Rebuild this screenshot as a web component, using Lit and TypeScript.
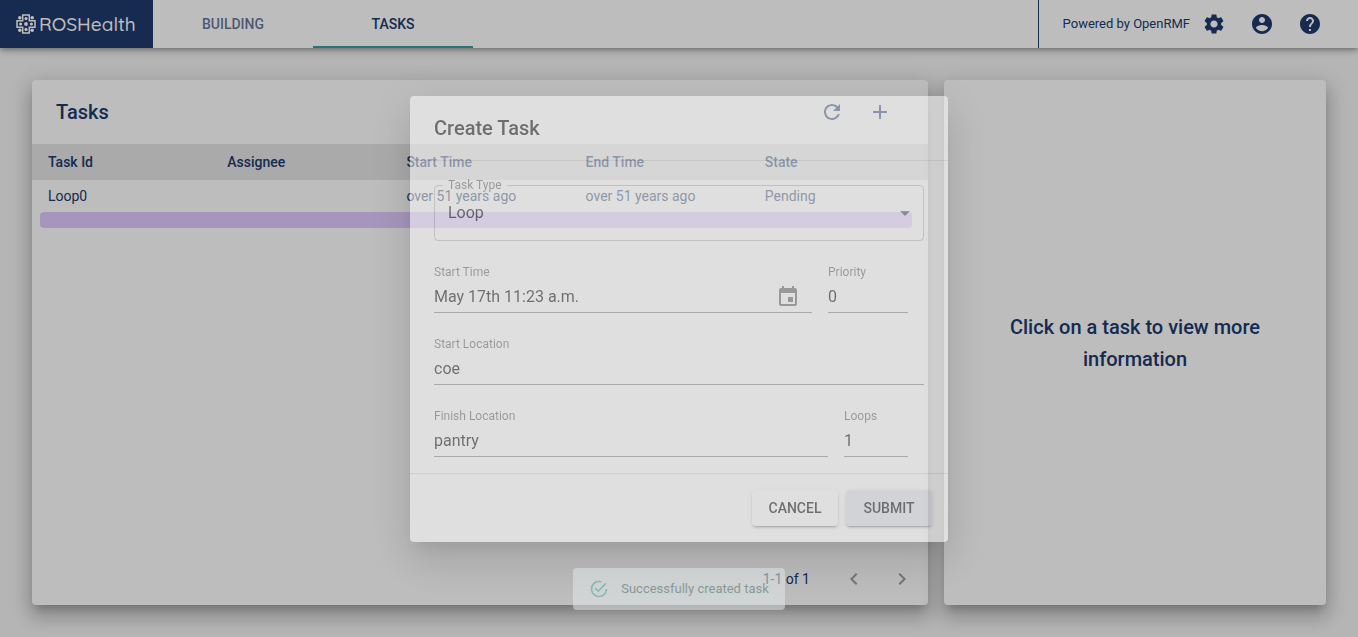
import { LitElement, html, css, svg } from "lit";
import { customElement, property, state } from "lit/decorators.js";

const ICONS: Record<string, string> = {
  settings:
    "M19.14 12.94c.04-.3.06-.61.06-.94 0-.32-.02-.64-.07-.94l2.03-1.58c.18-.14.23-.41.12-.61l-1.92-3.32c-.12-.22-.37-.29-.59-.22l-2.39.96c-.5-.38-1.03-.7-1.62-.94l-.36-2.54c-.04-.24-.24-.41-.48-.41h-3.84c-.24 0-.43.17-.47.41l-.36 2.54c-.59.24-1.13.57-1.62.94l-2.39-.96c-.22-.08-.47 0-.59.22L2.74 8.87c-.12.21-.08.47.12.61l2.03 1.58c-.05.3-.09.63-.09.94s.02.64.07.94l-2.03 1.58c-.18.14-.23.41-.12.61l1.92 3.32c.12.22.37.29.59.22l2.39-.96c.5.38 1.03.7 1.62.94l.36 2.54c.05.24.24.41.48.41h3.84c.24 0 .44-.17.47-.41l.36-2.54c.59-.24 1.13-.56 1.62-.94l2.39.96c.22.08.47 0 .59-.22l1.92-3.32c.12-.22.07-.47-.12-.61l-2.01-1.58zM12 15.6c-1.98 0-3.6-1.62-3.6-3.6s1.62-3.6 3.6-3.6 3.6 1.62 3.6 3.6-1.62 3.6-3.6 3.6z",
  account:
    "M12 2C6.48 2 2 6.48 2 12s4.48 10 10 10 10-4.48 10-10S17.52 2 12 2zm0 3c1.66 0 3 1.34 3 3s-1.34 3-3 3-3-1.34-3-3 1.34-3 3-3zm0 14.2c-2.5 0-4.71-1.28-6-3.22.03-1.99 4-3.08 6-3.08 1.99 0 5.97 1.09 6 3.08-1.29 1.94-3.5 3.22-6 3.22z",
  help: "M12 2C6.48 2 2 6.48 2 12s4.48 10 10 10 10-4.48 10-10S17.52 2 12 2zm1 17h-2v-2h2v2zm2.07-7.75l-.9.92C13.45 12.9 13 13.5 13 15h-2v-.5c0-1.1.45-2.1 1.17-2.83l1.24-1.26c.37-.36.59-.86.59-1.41 0-1.1-.9-2-2-2s-2 .9-2 2H8c0-2.21 1.79-4 4-4s4 1.79 4 4c0 .88-.36 1.68-.93 2.25z",
  refresh:
    "M17.65 6.35C16.2 4.9 14.21 4 12 4c-4.42 0-7.99 3.58-7.99 8s3.57 8 7.99 8c3.73 0 6.84-2.55 7.73-6h-2.08c-.82 2.33-3.04 4-5.65 4-3.31 0-6-2.69-6-6s2.69-6 6-6c1.66 0 3.14.69 4.22 1.78L13 11h7V4l-2.35 2.35z",
  add: "M19 13h-6v6h-2v-6H5v-2h6V5h2v6h6v2z",
  left: "M15.41 7.41L14 6l-6 6 6 6 1.41-1.41L10.83 12z",
  right: "M10 6L8.59 7.41 13.17 12l-4.58 4.59L10 18l6-6z",
  event:
    "M17 12h-5v5h5v-5zM16 1v2H8V1H6v2H5c-1.11 0-1.99.9-1.99 2L3 19c0 1.1.89 2 2 2h14c1.1 0 2-.9 2-2V5c0-1.1-.9-2-2-2h-1V1h-2zm3 18H5V8h14v11z",
  dropdown: "M7 10l5 5 5-5z",
  success:
    "M20 12A8 8 0 0 1 12 20A8 8 0 0 1 4 12A8 8 0 0 1 12 4C12.76 4 13.5 4.11 14.2 4.31L15.77 2.74C14.61 2.26 13.34 2 12 2A10 10 0 0 0 2 12A10 10 0 0 0 12 22A10 10 0 0 0 22 12M7.91 10.08L6.5 11.5L11 16L21 6L19.59 4.58L11 13.17L7.91 10.08Z",
};

@customElement("rmf-icon")
export class RmfIcon extends LitElement {
  @property() name = "add";

  static styles = css`
    :host {
      display: inline-flex;
      width: 24px;
      height: 24px;
      flex: none;
    }
    svg {
      width: 100%;
      height: 100%;
      fill: currentColor;
    }
  `;

  render() {
    return html`<svg viewBox="0 0 24 24" aria-hidden="true">
      ${svg`<path d=${ICONS[this.name]} />`}
    </svg>`;
  }
}

@customElement("app-header")
export class AppHeader extends LitElement {
  @state() private tab = "Tasks";

  static styles = css`
    :host {
      display: flex;
      height: 48px;
      background: #fff;
      color: #20396c;
      position: relative;
      box-shadow: 0 2px 4px -1px rgba(0, 0, 0, 0.2),
        0 4px 5px 0 rgba(0, 0, 0, 0.14), 0 1px 10px 0 rgba(0, 0, 0, 0.12);
    }
    .brand {
      display: flex;
      align-items: center;
      gap: 3px;
      padding: 0 16px;
      background: #20396c;
      color: #fff;
      text-decoration: none;
      font: 500 19px/24px Quicksand, Lato, sans-serif;
      box-sizing: border-box;
      width: 153px;
    }
    .mark {
      width: 20px;
      height: 20px;
      flex: none;
    }
    .tabs {
      display: flex;
      flex: 1;
    }
    .tab {
      width: 160px;
      border: 0;
      border-bottom: 2px solid transparent;
      padding: 2px 12px 0;
      background: none;
      color: rgba(32, 57, 108, 0.7);
      font: 500 14px/24px Roboto, sans-serif;
      text-transform: uppercase;
    }
    .tab.active {
      color: #20396c;
      border-bottom-color: #26a69a;
    }
    .tools {
      display: flex;
      align-items: center;
      padding: 0 24px;
      border-left: 1px solid #20396c;
      font: 400 13px/20px Roboto, sans-serif;
    }
    .icon-button {
      display: inline-flex;
      padding: 12px;
      border: 0;
      background: none;
      color: inherit;
    }
  `;

  render() {
    return html`
      <a class="brand" href="#home">
        <svg class="mark" viewBox="0 0 20 20" aria-hidden="true">
          <path
            d="M6.7 1H13.3V6.7H19V13.3H13.3V19H6.7V13.3H1V6.7H6.7Z"
            fill="none"
            stroke="#fff"
            stroke-width="1.5"
          />
          <g fill="#fff">
            <circle cx="10" cy="10" r="1.9" />
            <circle cx="10" cy="4.6" r="1.6" />
            <circle cx="10" cy="15.4" r="1.6" />
            <circle cx="4.6" cy="10" r="1.6" />
            <circle cx="15.4" cy="10" r="1.6" />
            <circle cx="3.8" cy="3.8" r="1.8" />
            <circle cx="16.2" cy="3.8" r="1.8" />
            <circle cx="3.8" cy="16.2" r="1.8" />
            <circle cx="16.2" cy="16.2" r="1.8" />
          </g>
        </svg>
        <span>ROSHealth</span>
      </a>
      <div class="tabs" role="tablist">
        ${["Building", "Tasks"].map(
          (name) => html`<button
            class="tab ${this.tab === name ? "active" : ""}"
            role="tab"
            aria-selected=${this.tab === name}
            @click=${() => (this.tab = name)}
          >
            ${name}
          </button>`
        )}
      </div>
      <div class="tools">
        <span>Powered by OpenRMF</span>
        ${["settings", "account", "help"].map(
          (name) => html`<button class="icon-button" aria-label=${name}>
            <rmf-icon name=${name}></rmf-icon>
          </button>`
        )}
      </div>
    `;
  }
}

@customElement("task-panel")
export class TaskPanel extends LitElement {
  private tasks = [
    {
      id: "Loop0",
      assignee: "",
      start: "over 51 years ago",
      end: "over 51 years ago",
      state: "Pending",
    },
  ];

  static styles = css`
    :host {
      display: flex;
      flex-direction: column;
      color: #20396c;
      font: 400 14px/20px Roboto, sans-serif;
    }
    .toolbar {
      display: flex;
      align-items: center;
      height: 64px;
      padding: 0 24px;
    }
    .title {
      flex: 1;
      margin: 0;
      font: 500 20px/32px Roboto, sans-serif;
    }
    .icon-button {
      display: inline-flex;
      padding: 12px;
      border: 0;
      background: none;
      color: inherit;
    }
    .table {
      width: 100%;
      table-layout: fixed;
      border-collapse: collapse;
    }
    .head {
      background: #e6e6e6;
    }
    th {
      padding: 8px 16px;
      font-weight: 500;
      text-align: left;
    }
    .cell {
      padding: 6px 16px;
    }
    .timeline {
      padding: 0 16px 0 8px;
    }
    .bar {
      height: 16px;
      border-radius: 4px;
      background: #e0cbfe;
    }
    .pager {
      display: flex;
      align-items: center;
      justify-content: flex-end;
      height: 52px;
      margin-top: auto;
      padding-right: 2px;
    }
    .range {
      margin-right: 20px;
    }
    .pager .icon-button {
      color: rgba(0, 0, 0, 0.38);
    }
  `;

  render() {
    return html`
      <div class="toolbar">
        <h1 class="title">Tasks</h1>
        <button class="icon-button" aria-label="Refresh">
          <rmf-icon name="refresh"></rmf-icon>
        </button>
        <button class="icon-button" aria-label="Create task">
          <rmf-icon name="add"></rmf-icon>
        </button>
      </div>
      <table class="table">
        <thead>
          <tr class="head">
            ${["Task Id", "Assignee", "Start Time", "End Time", "State"].map(
              (h) => html`<th scope="col">${h}</th>`
            )}
          </tr>
        </thead>
        <tbody>
          ${this.tasks.map(
            (t) => html`<tr>
                <td class="cell">${t.id}</td>
                <td class="cell">${t.assignee}</td>
                <td class="cell">${t.start}</td>
                <td class="cell">${t.end}</td>
                <td class="cell">${t.state}</td>
              </tr>
              <tr>
                <td class="timeline" colspan="5"><div class="bar"></div></td>
              </tr>`
          )}
        </tbody>
      </table>
      <div class="pager">
        <span class="range">1-1 of 1</span>
        <button class="icon-button" aria-label="Previous page">
          <rmf-icon name="left"></rmf-icon>
        </button>
        <button class="icon-button" aria-label="Next page">
          <rmf-icon name="right"></rmf-icon>
        </button>
      </div>
    `;
  }
}

@customElement("create-task-dialog")
export class CreateTaskDialog extends LitElement {
  static styles = css`
    :host {
      display: block;
      box-sizing: border-box;
      width: 538px;
      max-width: 100%;
      border-radius: 4px;
      background: #fff;
      color: rgba(0, 0, 0, 0.87);
      font: 400 16px/24px Roboto, sans-serif;
      opacity: 0.51;
      box-shadow: 0 11px 15px -7px rgba(0, 0, 0, 0.2),
        0 24px 38px 3px rgba(0, 0, 0, 0.14), 0 9px 46px 8px rgba(0, 0, 0, 0.12);
    }
    .title {
      margin: 0;
      padding: 16px 24px;
      font: 500 20px/32px Roboto, sans-serif;
    }
    .content {
      display: flex;
      flex-direction: column;
      gap: 24px;
      padding: 24px 24px 16px;
      border: solid rgba(0, 0, 0, 0.12);
      border-width: 1px 0;
    }
    .outlined {
      position: relative;
      height: 56px;
    }
    .outline {
      position: absolute;
      inset: -5px 0 0;
      margin: 0;
      padding: 0 8px;
      border: 1px solid rgba(0, 0, 0, 0.23);
      border-radius: 4px;
      pointer-events: none;
    }
    .legend {
      padding: 0 5px;
      font-size: 12px;
      line-height: 11px;
      color: rgba(0, 0, 0, 0.54);
    }
    .select {
      width: 100%;
      height: 56px;
      padding: 0 32px 0 14px;
      border: 0;
      background: none;
      appearance: none;
      color: inherit;
      font: inherit;
    }
    .arrow {
      position: absolute;
      right: 7px;
      top: 16px;
      pointer-events: none;
      color: rgba(0, 0, 0, 0.54);
    }
    .row {
      display: flex;
      gap: 16px;
      padding-right: 16px;
    }
    .field {
      display: flex;
      flex-direction: column;
      min-width: 0;
      height: 48px;
      box-sizing: border-box;
      border-bottom: 1px solid rgba(0, 0, 0, 0.42);
    }
    .grow {
      flex: 1;
    }
    .priority {
      width: 80px;
    }
    .loops {
      width: 64px;
    }
    .label {
      font-size: 12px;
      line-height: 14px;
      color: rgba(0, 0, 0, 0.54);
    }
    .entry {
      display: flex;
      align-items: center;
      height: 30px;
      margin-top: auto;
    }
    .input {
      flex: 1;
      width: 100%;
      min-width: 0;
      padding: 0;
      border: 0;
      outline: 0;
      background: none;
      color: inherit;
      font: inherit;
    }
    .picker {
      display: inline-flex;
      padding: 0 12px;
      border: 0;
      background: none;
      color: rgba(0, 0, 0, 0.54);
    }
    .actions {
      display: flex;
      justify-content: flex-end;
      gap: 8px;
      padding: 16px;
    }
    .button {
      padding: 6px 16px;
      border: 0;
      border-radius: 4px;
      background: #fff;
      color: inherit;
      font: 500 14px/24px Roboto, sans-serif;
      text-transform: uppercase;
      box-shadow: 0 3px 1px -2px rgba(0, 0, 0, 0.2),
        0 2px 2px 0 rgba(0, 0, 0, 0.14), 0 1px 5px 0 rgba(0, 0, 0, 0.12);
      min-width: 86px;
    }
    .submit {
      background: #e6e8f0;
    }
  `;

  private field(id: string, label: string, value: string, size: string, picker = false) {
    return html`<div class="field ${size}">
      <label class="label" for=${id}>${label}</label>
      <div class="entry">
        <input class="input" id=${id} .value=${value} />
        ${picker
          ? html`<button class="picker" type="button" aria-label="Choose date">
              <rmf-icon name="event"></rmf-icon>
            </button>`
          : ""}
      </div>
    </div>`;
  }

  render() {
    return html`
      <form role="dialog" aria-labelledby="title" @submit=${(e: Event) => e.preventDefault()}>
        <h2 class="title" id="title">Create Task</h2>
        <div class="content">
          <div class="outlined">
            <fieldset class="outline">
              <legend class="legend"><label for="type">Task Type</label></legend>
            </fieldset>
            <select class="select" id="type">
              <option>Loop</option>
              <option>Delivery</option>
              <option>Clean</option>
            </select>
            <rmf-icon class="arrow" name="dropdown"></rmf-icon>
          </div>
          <div class="row">
            ${this.field("start-time", "Start Time", "May 17th 11:23 a.m.", "grow", true)}
            ${this.field("priority", "Priority", "0", "priority")}
          </div>
          ${this.field("start", "Start Location", "coe", "")}
          <div class="row">
            ${this.field("finish", "Finish Location", "pantry", "grow")}
            ${this.field("loops", "Loops", "1", "loops")}
          </div>
        </div>
        <div class="actions">
          <button class="button" type="button">Cancel</button>
          <button class="button submit" type="submit">Submit</button>
        </div>
      </form>
    `;
  }
}

@customElement("app-root")
export class AppRoot extends LitElement {
  static styles = css`
    :host {
      display: flex;
      flex-direction: column;
      min-height: 100vh;
      background: #f4f4f4;
      font-family: Roboto, sans-serif;
    }
    .main {
      flex: 1;
      display: grid;
      grid-template-columns: 448fr 191fr;
      gap: 16px;
      padding: 32px;
    }
    .paper {
      border-radius: 4px;
      background: #fff;
      box-shadow: 0 7px 8px -4px rgba(0, 0, 0, 0.2),
        0 12px 17px 2px rgba(0, 0, 0, 0.14), 0 5px 22px 4px rgba(0, 0, 0, 0.12);
    }
    .detail {
      display: flex;
      align-items: center;
      justify-content: center;
      padding: 0 48px;
      color: #20396c;
      font: 500 20px/32px Roboto, sans-serif;
      text-align: center;
    }
    .hint {
      margin: 0;
    }
    .overlay {
      position: fixed;
      inset: 0;
      display: flex;
      align-items: center;
      justify-content: center;
      background: rgba(0, 0, 0, 0.26);
    }
    .snackbar {
      position: fixed;
      bottom: 27px;
      left: 0;
      right: 0;
      display: flex;
      justify-content: center;
      pointer-events: none;
    }
    .alert {
      display: flex;
      align-items: center;
      gap: 12px;
      height: 42px;
      padding: 0 16px;
      border-radius: 4px;
      background: #e0e8e7;
      color: #5b7a72;
      font: 400 13px/20px Roboto, sans-serif;
      opacity: 0.54;
    }
    .check {
      width: 20px;
      height: 20px;
      color: #5fb5ad;
    }
  `;

  render() {
    return html`
      <app-header></app-header>
      <main class="main">
        <task-panel class="paper"></task-panel>
        <aside class="paper detail">
          <p class="hint">Click on a task to view more information</p>
        </aside>
      </main>
      <div class="overlay">
        <create-task-dialog></create-task-dialog>
      </div>
      <div class="snackbar">
        <div class="alert" role="alert">
          <rmf-icon class="check" name="success"></rmf-icon>
          <span>Successfully created task</span>
        </div>
      </div>
    `;
  }
}
